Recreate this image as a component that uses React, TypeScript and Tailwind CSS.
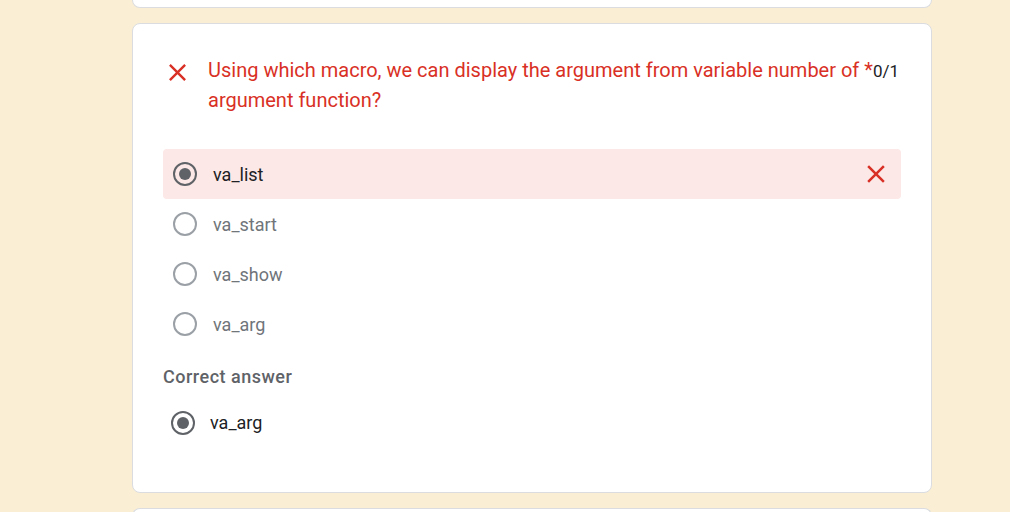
import React from 'react';

const options = [
  { id: 1, label: 'va_list', selected: true, wrong: true },
  { id: 2, label: 'va_start', selected: false, wrong: false },
  { id: 3, label: 'va_show', selected: false, wrong: false },
  { id: 4, label: 'va_arg', selected: false, wrong: false },
];

function CloseIcon({ className }: { className?: string }) {
  return (
    <svg viewBox="0 0 24 24" className={className} fill="currentColor">
      <path d="M19 6.41L17.59 5 12 10.59 6.41 5 5 6.41 10.59 12 5 17.59 6.41 19 12 13.41 17.59 19 19 17.59 13.41 12z" />
    </svg>
  );
}

function Radio({ checked }: { checked: boolean }) {
  return (
    <div
      className={`w-[24px] h-[24px] rounded-full border-2 flex items-center justify-center shrink-0 ${
        checked ? 'border-[#5f6368]' : 'border-[#9aa0a6]'
      }`}
    >
      {checked && <div className="w-[12px] h-[12px] rounded-full bg-[#5f6368]" />}
    </div>
  );
}

export default function App() {
  return (
    <main className="min-h-screen bg-[#faefd4] font-['Roboto',sans-serif] overflow-hidden">
      <div className="ml-[132px] w-[800px] flex flex-col gap-[15px]">
        <div className="h-[8px] bg-white border border-t-0 border-[#dadce0] rounded-b-lg" />

        <div className="bg-white border border-[#dadce0] rounded-lg pt-[31px] pb-[30px] px-[30px] h-[470px]">
          <div className="flex items-start">
            <div className="w-[45px] pt-[3px] flex">
              <CloseIcon className="w-[29px] h-[29px] text-[#d93025]" />
            </div>
            <div className="flex-1 text-[20px] leading-[30px] text-[#d93025]">
              Using which macro, we can display the argument from variable number of{' '}
              *<span className="text-[17px] leading-none text-[#202124]">0/1</span> argument function?
            </div>
          </div>

          <div className="mt-[34px] flex flex-col">
            {options.map((opt) => (
              <div
                key={opt.id}
                className={`h-[50px] flex items-center pl-[10px] pr-[10px] rounded ${
                  opt.wrong ? 'bg-[#fce8e6]' : ''
                }`}
              >
                <Radio checked={opt.selected} />
                <span
                  className={`ml-[16px] text-[18px] flex-1 ${
                    opt.selected ? 'text-[#202124]' : 'text-[#70757a]'
                  }`}
                >
                  {opt.label}
                </span>
                {opt.wrong && <CloseIcon className="w-[30px] h-[30px] text-[#d93025]" />}
              </div>
            ))}
          </div>

          <div className="mt-[14px] text-[18px] font-medium text-[#5f6368] tracking-[0.5px]">Correct answer</div>

          <div className="mt-[19px] flex items-center pl-[8px]">
            <Radio checked />
            <span className="ml-[15px] text-[18px] text-[#202124]">va_arg</span>
          </div>
        </div>

        <div className="h-[20px] bg-white border border-b-0 border-[#dadce0] rounded-t-lg" />
      </div>
    </main>
  );
}
